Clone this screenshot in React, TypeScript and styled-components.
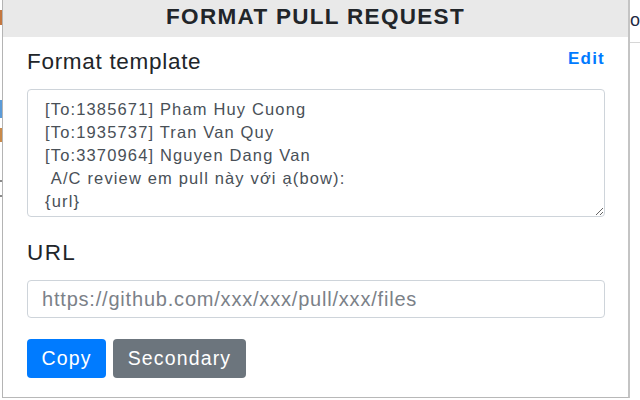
import React from "react";
import styled, { createGlobalStyle } from "styled-components";

const Global = createGlobalStyle`
  html, body { margin: 0; padding: 0; background: #ffffff; }
  body { font-family: "Liberation Sans", Arial, sans-serif; }
  * { box-sizing: border-box; }
`;

const Page = styled.div`
  display: flex;
  width: 640px;
  height: 400px;
  overflow: hidden;
  background: #ffffff;
`;

const LeftStrip = styled.div`
  width: 2px;
  display: flex;
  flex-direction: column;
  flex-shrink: 0;
`;

const Bit = styled.div<{ $top: number; $h: number; $c: string }>`
  margin-top: ${(p) => p.$top}px;
  height: ${(p) => p.$h}px;
  background: ${(p) => p.$c};
`;

const RightStrip = styled.div`
  flex: 1;
  overflow: hidden;
  display: flex;
  flex-direction: column;
`;

const PeekText = styled.div`
  height: 43px;
  border-bottom: 1px solid #d6d6d6;
  font-size: 18px;
  line-height: 40px;
  color: #1f2a44;
  white-space: nowrap;
`;

const Popup = styled.div`
  width: 628px;
  height: 398px;
  flex-shrink: 0;
  display: flex;
  flex-direction: column;
  background: #ffffff;
  border-left: 1px solid #b4b4b4;
  border-right: 2px solid #c4c4c4;
  border-bottom: 1px solid #b8b8b8;
`;

const Header = styled.div`
  height: 37px;
  background: #e9e9e9;
  text-align: center;
  font-weight: 700;
  font-size: 22.5px;
  line-height: 33px;
  letter-spacing: 1.3px;
  color: #212529;
`;

const Body = styled.div`
  padding: 12px 23px 0 24px;
  display: flex;
  flex-direction: column;
`;

const TitleRow = styled.div`
  display: flex;
  justify-content: space-between;
  align-items: flex-start;
`;

const Label = styled.div`
  font-size: 22.5px;
  line-height: 26px;
  letter-spacing: 0.7px;
  color: #212529;
`;

const EditLink = styled.a`
  font-size: 17px;
  font-weight: 700;
  line-height: 20px;
  letter-spacing: 1.2px;
  color: #007bff;
  text-decoration: none;
  cursor: pointer;
`;

const TemplateArea = styled.textarea`
  margin-top: 14px;
  width: 100%;
  height: 128px;
  padding: 8px 17px 3px;
  border: 1px solid #ced4da;
  border-radius: 4px;
  font-family: "Liberation Sans", Arial, sans-serif;
  font-size: 16.5px;
  line-height: 23px;
  letter-spacing: 1.15px;
  color: #495057;
  overflow: hidden;
  resize: vertical;
  outline: none;
`;

const UrlLabel = styled(Label)`
  margin-top: 23px;
  letter-spacing: 1.4px;
`;

const UrlInput = styled.input`
  margin-top: 14px;
  width: 100%;
  height: 38px;
  padding: 0 14px;
  border: 1px solid #ced4da;
  border-radius: 4px;
  font-family: "Liberation Sans", Arial, sans-serif;
  font-size: 20px;
  letter-spacing: 0.8px;
  color: #495057;
  outline: none;
  &::placeholder {
    color: #7b8188;
  }
`;

const ButtonRow = styled.div`
  margin-top: 21px;
  display: flex;
  gap: 7px;
`;

const Button = styled.button<{ $variant: "primary" | "secondary" }>`
  height: 39px;
  padding: 0 14.5px;
  border: none;
  border-radius: 4px;
  font-family: "Liberation Sans", Arial, sans-serif;
  font-size: 19.5px;
  letter-spacing: 1.15px;
  color: #ffffff;
  background: ${(p) => (p.$variant === "primary" ? "#007bff" : "#6c757d")};
  cursor: pointer;
`;

const template = `[To:1385671] Pham Huy Cuong
[To:1935737] Tran Van Quy
[To:3370964] Nguyen Dang Van
 A/C review em pull này với ạ(bow):
{url}`;

export default function App() {
  return (
    <>
      <Global />
      <Page>
        <LeftStrip>
          <Bit $top={10} $h={15} $c="#c4773f" />
          <Bit $top={75} $h={18} $c="#5b9bd8" />
          <Bit $top={10} $h={14} $c="#c98a4a" />
          <Bit $top={38} $h={2} $c="#8a8a8a" />
          <Bit $top={13} $h={2} $c="#8a8a8a" />
        </LeftStrip>
        <Popup>
          <Header>FORMAT PULL REQUEST</Header>
          <Body>
            <TitleRow>
              <Label>Format template</Label>
              <EditLink>Edit</EditLink>
            </TitleRow>
            <TemplateArea defaultValue={template} spellCheck={false} />
            <UrlLabel>URL</UrlLabel>
            <UrlInput placeholder="https://github.com/xxx/xxx/pull/xxx/files" />
            <ButtonRow>
              <Button $variant="primary">Copy</Button>
              <Button $variant="secondary">Secondary</Button>
            </ButtonRow>
          </Body>
        </Popup>
        <RightStrip>
          <PeekText>o</PeekText>
        </RightStrip>
      </Page>
    </>
  );
}
